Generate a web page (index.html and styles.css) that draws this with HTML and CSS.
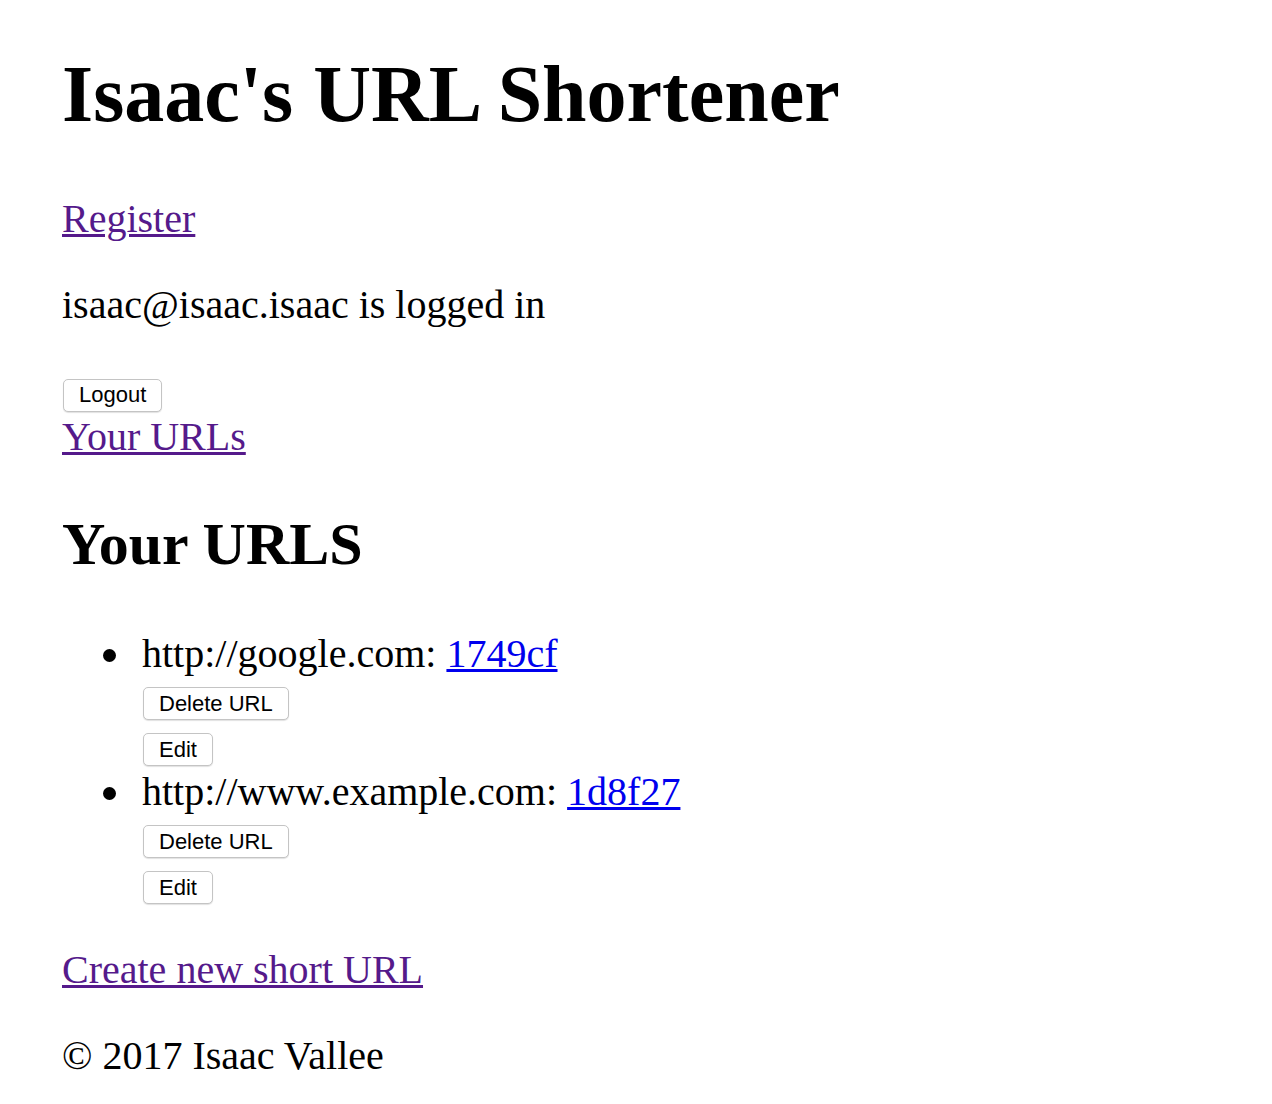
FILE: index.html
```html
<!DOCTYPE html>
<html lang="en">
<head>
<meta charset="utf-8">
<title>Isaac's URL Shortener</title>
<link rel="stylesheet" href="styles.css">
</head>
<body class="page">
  <h1 class="title">Isaac's URL Shortener</h1>
  <div class="nav"><a class="link visited" href="#register">Register</a></div>
  <p class="para">isaac@isaac.isaac is logged in</p>
  <form class="form"><button class="btn" type="button">Logout</button></form>
  <div class="nav"><a class="link visited" href="#urls">Your URLs</a></div>
  <h2 class="subtitle">Your URLS</h2>
  <ul class="url-list">
    <li class="url-item">http://google.com: <a class="link" href="#1749cf">1749cf</a>
      <form class="form"><button class="btn" type="button">Delete URL</button></form>
      <form class="form"><button class="btn" type="button">Edit</button></form>
    </li>
    <li class="url-item">http://www.example.com: <a class="link" href="#1d8f27">1d8f27</a>
      <form class="form"><button class="btn" type="button">Delete URL</button></form>
      <form class="form"><button class="btn" type="button">Edit</button></form>
    </li>
  </ul>
  <p class="para"><a class="link visited" href="#new">Create new short URL</a></p>
  <p class="para">© 2017 Isaac Vallee</p>
</body>
</html>
```
FILE: styles.css
```css
.page {
  margin: 0 62px;
  padding: 0;
  font-family: "Liberation Serif", "Times New Roman", serif;
  font-size: 40px;
  line-height: 46px;
  color: #000;
  background: #fff;
}
.title {
  font-size: 80px;
  line-height: 92px;
  font-weight: bold;
  margin: 48px 0 56px;
}
.subtitle {
  font-size: 60px;
  line-height: 69px;
  font-weight: bold;
  margin: 49.8px 0 52px;
}
.nav {
  margin: 0;
}
.para {
  margin: 40px 0;
}
.link {
  color: #0000ee;
  text-decoration: underline;
  text-decoration-thickness: 3px;
}
.link.visited {
  color: #551a8b;
}
.form {
  margin: 0;
}
.url-list {
  margin: 40px 0;
  padding-left: 80px;
  list-style: none;
}
.url-item {
  position: relative;
}
.url-item::before {
  content: "";
  position: absolute;
  left: -39px;
  top: 18px;
  width: 13px;
  height: 13px;
  border-radius: 50%;
  background: #000;
}
.btn {
  font-family: "Liberation Sans", Arial, sans-serif;
  font-size: 22px;
  line-height: normal;
  height: 33px;
  padding: 0 15px;
  margin: 0 0 0 1px;
  border: 1px solid #c4c4c4;
  border-radius: 5px;
  background: #fff;
  color: #000;
  box-shadow: 0 1px 1px rgba(0, 0, 0, 0.12);
  vertical-align: 2px;
}
```
